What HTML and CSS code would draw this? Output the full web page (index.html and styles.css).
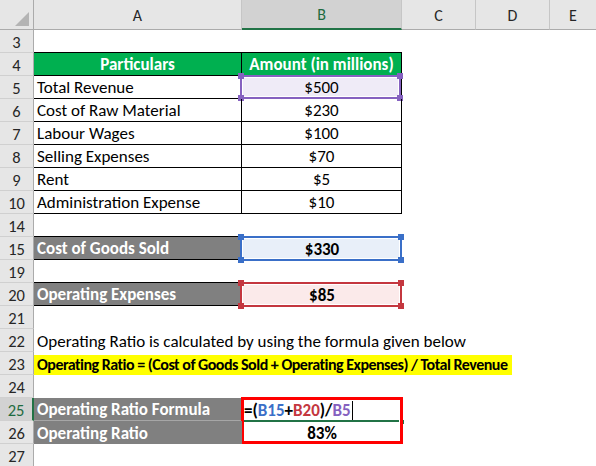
FILE: index.html
```html
<!DOCTYPE html>
<html>
<head>
<meta charset="utf-8">
<link rel="stylesheet" href="styles.css">
</head>
<body>
<div class="sheet">
  <div class="hdr-row">
    <div class="corner"><span class="tri"></span></div>
    <div class="ch">A</div>
    <div class="ch sel">B</div>
    <div class="ch">C</div>
    <div class="ch">D</div>
    <div class="ch last">E</div>
  </div>

  <div class="row"><div class="rh">3</div><div class="c bb"></div><div class="c bb"></div><div class="c"></div></div>
  <div class="row"><div class="rh">4</div><div class="c t hd">Particulars</div><div class="c t hd">Amount (in millions)</div><div class="c"></div></div>
  <div class="row"><div class="rh">5</div><div class="c t">Total Revenue</div><div class="c t num ref purple"><span class="box"><i class="q tl"></i><i class="q tr"></i><i class="q bl"></i><i class="q br"></i></span>$500</div><div class="c"></div></div>
  <div class="row"><div class="rh">6</div><div class="c t">Cost of Raw Material</div><div class="c t num">$230</div><div class="c"></div></div>
  <div class="row"><div class="rh">7</div><div class="c t">Labour Wages</div><div class="c t num">$100</div><div class="c"></div></div>
  <div class="row"><div class="rh">8</div><div class="c t">Selling Expenses</div><div class="c t num">$70</div><div class="c"></div></div>
  <div class="row"><div class="rh">9</div><div class="c t">Rent</div><div class="c t num">$5</div><div class="c"></div></div>
  <div class="row"><div class="rh">10</div><div class="c t">Administration Expense</div><div class="c t num">$10</div><div class="c"></div></div>
  <div class="row"><div class="rh">14</div><div class="c bb"></div><div class="c"></div><div class="c"></div></div>
  <div class="row"><div class="rh">15</div><div class="c bb gr">Cost of Goods Sold</div><div class="c num strong ref blue"><span class="box"><i class="q tl"></i><i class="q tr"></i><i class="q bl"></i><i class="q br"></i></span>$330</div><div class="c"></div></div>
  <div class="row"><div class="rh">19</div><div class="c bb"></div><div class="c"></div><div class="c"></div></div>
  <div class="row"><div class="rh">20</div><div class="c bb gr">Operating Expenses</div><div class="c num strong ref red"><span class="box"><i class="q tl"></i><i class="q tr"></i><i class="q bl"></i><i class="q br"></i></span>$85</div><div class="c"></div></div>
  <div class="row"><div class="rh">21</div><div class="c"></div><div class="c"></div><div class="c"></div></div>
  <div class="row"><div class="rh">22</div><div class="c wide">Operating Ratio is calculated by using the formula given below</div></div>
  <div class="row"><div class="rh">23</div><div class="c wide"><span class="hilite">Operating Ratio = (Cost of Goods Sold + Operating Expenses) / Total Revenue</span></div></div>
  <div class="row"><div class="rh">24</div><div class="c"></div><div class="c"></div><div class="c"></div></div>
  <div class="row"><div class="rh rsel">25</div><div class="c gr gline">Operating Ratio Formula</div><div class="c edit">=(<span class="fb">B15</span>+<span class="fr">B20</span>)/<span class="fp">B5</span><span class="caret"></span><span class="active"><i class="knob"></i></span><span class="annot"></span></div><div class="c"></div></div>
  <div class="row"><div class="rh">26</div><div class="c gr">Operating Ratio</div><div class="c num strong">83%</div><div class="c"></div></div>
  <div class="row"><div class="rh">27</div><div class="c"></div><div class="c"></div><div class="c"></div></div>
</div>
</body>
</html>
```

FILE: styles.css
```css
html, body {
  margin: 0;
  padding: 0;
  background: #ffffff;
}
body {
  font-family: Carlito, Lato, "Noto Sans", sans-serif;
  font-size: 17px;
  color: #000;
  width: 596px;
  height: 466px;
  overflow: hidden;
}
.sheet {
  display: flex;
  flex-direction: column;
}
.hdr-row {
  display: grid;
  grid-template-columns: 34px 208px 160px 74px 74px 1fr;
  height: 30px;
}
.corner, .ch {
  box-sizing: border-box;
  background: #e6e6e6;
  border-bottom: 1px solid #ababab;
  border-right: 1px solid #c6c6c6;
  position: relative;
}
.corner {
  border-right: 1px solid #ababab;
}
.tri {
  position: absolute;
  right: 4px;
  bottom: 3px;
  width: 0;
  height: 0;
  border-left: 14px solid transparent;
  border-bottom: 14px solid #b4b4b4;
}
.ch {
  display: flex;
  align-items: center;
  justify-content: center;
  font-size: 16px;
  color: #262626;
  padding-top: 1px;
}
.ch.sel {
  background: #d2d2d2;
  color: #1e6b40;
  border-bottom: 2px solid #217346;
}
.ch.last {
  border-right: none;
}
.row {
  display: grid;
  grid-template-columns: 34px 208px 160px 1fr;
  height: 23px;
}
.rh {
  box-sizing: border-box;
  background: #e6e6e6;
  border-right: 1px solid #ababab;
  border-bottom: 1px solid #d0d0d0;
  display: flex;
  align-items: center;
  justify-content: center;
  font-size: 16.5px;
  color: #262626;
  padding-top: 1px;
}
.rh.rsel {
  background: #d2d2d2;
  color: #1e6b40;
  border-right: 2px solid #217346;
}
.c {
  box-sizing: border-box;
  display: flex;
  align-items: center;
  padding: 1px 3px 0 3px;
  white-space: nowrap;
  position: relative;
}
.c.wide {
  grid-column: 2 / -1;
}
.t {
  border-right: 1px solid #000;
  border-bottom: 1px solid #000;
}
.bb {
  border-bottom: 1px solid #000;
}
.hd {
  background: #00b050;
  color: #fff;
  font-weight: 700;
  justify-content: center;
}
.num {
  justify-content: center;
}
.strong {
  font-weight: 700;
}
.gr {
  background: #808080;
  color: #fff;
  font-weight: 700;
}
.gline {
  border-bottom: 1px solid #a6a6a6;
}
.hilite {
  display: flex;
  align-items: center;
  background: #ffff00;
  font-weight: 700;
  font-size: 16px;
  letter-spacing: -0.5px;
  width: 478px;
  height: 20px;
  margin-left: -3px;
  padding-left: 3px;
  box-sizing: border-box;
  margin-top: 1px;
}

/* formula reference highlight boxes */
.ref .box {
  position: absolute;
  top: -1px;
  left: -2px;
  right: 0;
  bottom: -1px;
  border: 2px solid;
  box-shadow: inset 0 0 0 1px #fff;
  pointer-events: none;
}
.ref .q {
  position: absolute;
  width: 6px;
  height: 6px;
}
.q.tl { left: -4px; top: -4px; }
.q.tr { right: -4px; top: -4px; }
.q.bl { left: -4px; bottom: -4px; }
.q.br { right: -4px; bottom: -4px; }

.purple { background: #efebf7; }
.purple .box { border-color: #8561c0; }
.purple .q { background: #8561c0; }
.blue { background: #e8eff9; }
.blue .box { border-color: #3a6fc8; }
.blue .q { background: #3a6fc8; }
.red { background: #fbeaea; }
.red .box { border-color: #c4373f; }
.red .q { background: #c4373f; }

/* edited cell */
.edit {
  font-weight: 700;
  padding-left: 2px;
}
.fb { color: #3a6fc8; }
.fr { color: #c4373f; }
.fp { color: #8561c0; }
.caret {
  display: inline-block;
  width: 1px;
  height: 19px;
  background: #000;
  margin-left: 1px;
}
.active {
  position: absolute;
  left: -1px;
  right: 0;
  bottom: -1px;
  height: 2px;
  background: #217346;
}
.knob {
  position: absolute;
  right: -3px;
  top: -1px;
  width: 4px;
  height: 4px;
  background: #217346;
  border: 1px solid #fff;
}
.annot {
  position: absolute;
  left: -1px;
  top: -1px;
  width: 162px;
  height: 47px;
  box-sizing: border-box;
  border: 3px solid #ff0000;
  pointer-events: none;
}
```
